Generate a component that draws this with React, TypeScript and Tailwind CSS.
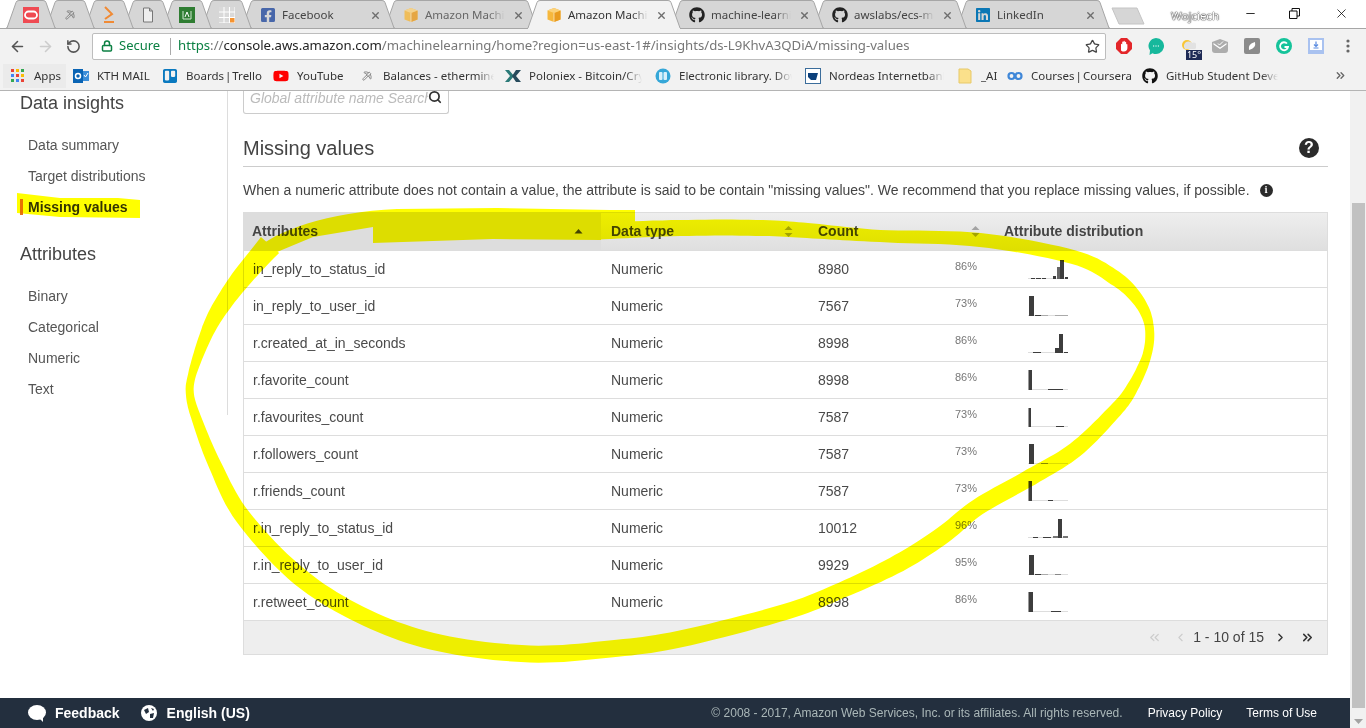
import React from "react";
import { FaGithub, FaLinkedin, FaFacebookSquare, FaYoutube, FaTrello } from "react-icons/fa";
import { Search, ArrowLeft, ArrowRight, RotateCw, Star, Lock, ChevronsLeft, ChevronLeft, ChevronRight, ChevronsRight, Minus, X, Pickaxe } from "lucide-react";

const Cube = ({ dim = false }: { dim?: boolean }) => (
  <svg width="16" height="16" viewBox="0 0 16 16" className={dim ? "shrink-0 opacity-80" : "shrink-0"}>
    <path d="M8 1 14.500 3.500V12.500L8 15 1.500 12.500V3.500Z" fill="#f6b73c" />
    <path d="M8 6 14.500 3.500V12.500L8 15Z" fill="#e99b1f" />
    <path d="M8 1 14.500 3.500 8 6 1.500 3.500Z" fill="#fbd27c" />
    <path d="M7.600 6V15H8.400V6Z" fill="#fff" opacity=".7" />
  </svg>
);

const TabShape = ({ w, active }: { w: number; active?: boolean }) => (
  <svg width={w} height="29" viewBox={`0 0 ${w} 29`} className="absolute left-0 top-0">
    <path
      d={`M0 ${active ? 29 : 28} L1 28 L10 2.500 Q10.500 .5 13 .5 L${w - 13} .5 Q${w - 10.500} .5 ${w - 10} 2.500 L${w - 1} 28 L${w} ${active ? 29 : 28}`}
      fill={active ? "#f2f2f2" : "#d6d6d6"}
      stroke="#a6a6a6"
      strokeWidth="1"
    />
  </svg>
);

const Tab = ({ w, z, icon, label, active, labelColor }: { w: number; z: number; icon: React.ReactNode; label?: string; active?: boolean; labelColor?: string }) => (
  <div className="relative -mr-[11px] h-[29px] shrink-0" style={{ width: w, zIndex: active ? 30 : z }}>
    <TabShape w={w} active={active} />
    <div className={`relative flex h-[28px] items-center pt-[2px] ${label ? "pl-[19px] pr-[14px]" : "justify-center"}`}>
      {icon}
      {label && (
        <>
          <span className={`ml-[6px] w-[80px] overflow-hidden whitespace-nowrap text-[11.500px] [mask-image:linear-gradient(to_right,black_80%,transparent)] ${labelColor ?? "text-[#444]"}`}>{label}</span>
          <X size={11} strokeWidth={3} className="ml-auto text-[#6d6d6d]" />
        </>
      )}
    </div>
  </div>
);

const bookmarks: { w: number; tw: number; label: string; icon: React.ReactNode; fade?: boolean; tight?: boolean }[] = [
  {
    w: 89, tw: 58, label: "KTH MAIL",
    icon: (
      <svg width="16" height="16" viewBox="0 0 16 16" className="shrink-0">
        <rect x="6" y="3" width="10" height="10" fill="#3c8ed8" />
        <rect x="0" y="1" width="10" height="14" fill="#0a64b4" />
        <circle cx="5" cy="8" r="2.500" fill="none" stroke="#fff" strokeWidth="1.500" />
        <path d="M11 7l1.500 2 2.500-4" stroke="#fff" fill="none" />
      </svg>
    ),
  },
  { w: 111, tw: 80, label: "Boards | Trello", tight: true, icon: <FaTrello size={16} color="#0a79bf" className="shrink-0" /> },
  { w: 86, tw: 52, label: "YouTube", icon: <FaYoutube size={16} color="#f00" className="shrink-0" /> },
  { w: 146, tw: 111, label: "Balances - ethermine", fade: true, icon: <span className="flex w-[16px] shrink-0 justify-center"><Pickaxe size={10} color="#777" /></span> },
  {
    w: 150, tw: 113, label: "Poloniex - Bitcoin/Crypto", fade: true,
    icon: (
      <svg width="16" height="14" viewBox="0 0 16 14" className="shrink-0">
        <path d="M0 1H4L9 7 4 13H0L5 7Z" fill="#2b7a78" />
        <path d="M16 1H11L7 7 11 13H16L11 7Z" fill="#274b5c" />
      </svg>
    ),
  },
  {
    w: 150, tw: 113, label: "Electronic library. Download", fade: true,
    icon: (
      <svg width="16" height="16" viewBox="0 0 16 16" className="shrink-0">
        <circle cx="8" cy="8" r="7.500" fill="#35a7d8" />
        <rect x="4" y="4" width="3.500" height="8" rx="1" fill="#d8f0fa" />
        <rect x="8.500" y="4" width="3.500" height="8" rx="1" fill="#d8f0fa" />
      </svg>
    ),
  },
  {
    w: 152, tw: 115, label: "Nordeas Internetbank", fade: true,
    icon: (
      <svg width="16" height="16" viewBox="0 0 16 16" className="shrink-0">
        <rect x=".5" y=".5" width="15" height="15" fill="#fff" stroke="#3b6d9b" />
        <path d="M3 5H13L11 12H6L3 9Z" fill="#0b3f7a" />
      </svg>
    ),
  },
  {
    w: 50, tw: 18, label: "_AI",
    icon: (
      <svg width="16" height="16" viewBox="0 0 16 16" className="shrink-0">
        <path d="M2 1H11L14 3V15H2Z" fill="#fbe08b" stroke="#e7c969" />
      </svg>
    ),
  },
  {
    w: 135, tw: 102, label: "Courses | Coursera", tight: true,
    icon: (
      <svg width="16" height="10" viewBox="0 0 16 10" className="shrink-0">
        <circle cx="4.500" cy="5" r="3" fill="none" stroke="#3f87d8" strokeWidth="2.200" />
        <circle cx="11.500" cy="5" r="3" fill="none" stroke="#3f87d8" strokeWidth="2.200" />
      </svg>
    ),
  },
  { w: 136, tw: 112, label: "GitHub Student Developer", fade: true, icon: <FaGithub size={16} color="#111" className="shrink-0" /> },
];

const spark: { bars: [number, number, number, string?][] }[] = [
  { bars: [[3, 4, 1], [8, 5, 1], [14, 4, 1], [25, 3, 3], [29, 3, 12, "#666"], [32, 4, 19], [37, 3, 2]] },
  { bars: [[1, 5, 20], [7, 6, 1], [13, 7, 1, "#aaa"], [27, 13, 1, "#aaa"]] },
  { bars: [[5, 8, 1], [27, 4, 5], [31, 4, 19], [36, 4, 1]] },
  { bars: [[0, 1, 20, "#999"], [1, 3, 20], [20, 15, 1]] },
  { bars: [[0, 1, 19, "#999"], [1, 2, 19], [28, 8, 1]] },
  { bars: [[1, 5, 20], [13, 7, 1, "#888"]] },
  { bars: [[0, 1, 20, "#999"], [1, 3, 20], [20, 5, 1]] },
  { bars: [[5, 5, 1], [15, 8, 1], [25, 5, 2, "#777"], [30, 4, 19], [35, 5, 2, "#777"]] },
  { bars: [[1, 5, 20], [7, 6, 1], [13, 7, 1, "#aaa"], [27, 6, 1, "#888"]] },
  { bars: [[0, 1, 20, "#999"], [1, 4, 20], [23, 10, 1]] },
];

const rows = [
  ["in_reply_to_status_id", "8980", "86%"],
  ["in_reply_to_user_id", "7567", "73%"],
  ["r.created_at_in_seconds", "8998", "86%"],
  ["r.favorite_count", "8998", "86%"],
  ["r.favourites_count", "7587", "73%"],
  ["r.followers_count", "7587", "73%"],
  ["r.friends_count", "7587", "73%"],
  ["r.in_reply_to_status_id", "10012", "96%"],
  ["r.in_reply_to_user_id", "9929", "95%"],
  ["r.retweet_count", "8998", "86%"],
];

const Spark = ({ i }: { i: number }) => (
  <svg width="40" height="22" viewBox="0 0 40 22" className="block">
    <rect x="0" y="20" width="40" height="1" fill="#ddd" />
    {spark[i].bars.map(([x, w, h, c], k) => (
      <rect key={k} x={x} y={21 - h} width={w} height={h} fill={c ?? "#3d3d3d"} />
    ))}
  </svg>
);

const SortBoth = () => (
  <svg width="9" height="11" viewBox="0 0 9 11" className="shrink-0">
    <path d="M4.500 0 8.500 4H.5Z M4.500 11 .5 7H8.500Z" fill="#a3a3a3" />
  </svg>
);

// A marker stroke of varying width, sampled along a smooth line through [x, y, width] points.
function ribbon(p: number[][]) {
  const pts: number[][] = [];
  for (let i = 0; i < p.length - 1; i++) {
    const a = p[Math.max(0, i - 1)], b = p[i], c = p[i + 1], e = p[Math.min(p.length - 1, i + 2)];
    for (let k = 0; k < 10; k++) {
      const t = k / 10;
      const f = (j: number) =>
        0.5 * (2 * b[j] + (c[j] - a[j]) * t + (2 * a[j] - 5 * b[j] + 4 * c[j] - e[j]) * t * t + (3 * b[j] - a[j] - 3 * c[j] + e[j]) * t * t * t);
      pts.push([f(0), f(1), b[2] + (c[2] - b[2]) * t]);
    }
  }
  pts.push(p[p.length - 1]);
  const left: string[] = [], right: string[] = [];
  pts.forEach((q, i) => {
    const s = pts[Math.max(0, i - 1)], n = pts[Math.min(pts.length - 1, i + 1)];
    const dx = n[0] - s[0], dy = n[1] - s[1], l = Math.hypot(dx, dy) || 1;
    const h = q[2] / 2;
    left.push(`${(q[0] - (dy / l) * h).toFixed(1)} ${(q[1] + (dx / l) * h).toFixed(1)}`);
    right.unshift(`${(q[0] + (dy / l) * h).toFixed(1)} ${(q[1] - (dx / l) * h).toFixed(1)}`);
  });
  return `M${left.join("L")}L${right.join("L")}Z`;
}

const ring = [
  [270, 245, 24], [240, 280, 20], [217, 313, 16], [204, 340, 12], [192, 375, 8], [190, 395, 8], [197, 420, 10], [215, 465, 13], [243, 517, 16],
  [300, 577, 18], [367, 618, 17], [440, 643, 17], [530, 654, 17], [610, 649, 17], [680, 639, 17], [785, 612, 16], [842, 590, 16], [899, 563, 18],
  [943, 535, 18], [978, 507, 17], [1031, 477, 17], [1075, 450, 16], [1113, 413, 14], [1131, 390, 12], [1147, 355, 9], [1149, 325, 9], [1138, 300, 12],
  [1115, 278, 15], [1073, 257, 14], [980, 240, 14], [880, 236, 12], [813, 231, 15], [763, 228, 16], [680, 228, 16], [600, 231, 17],
];

const Marker = () => (
  <svg width="1366" height="728" viewBox="0 0 1366 728" className="pointer-events-none absolute left-0 top-0 z-40 mix-blend-multiply">
    <path d="M248 258C262 236 320 212 397 209L497 208L610 210L635 210L635 223L601 226V240L493 239L373 243V227L313 237L277 252Z" fill="#ff0" />
    <path d={ribbon(ring)} fill="#ff0" />
    <path d="M17 193L60 198L118 198L140 200V218L60 217L17 213Z" fill="#ff0" />
  </svg>
);

const NavItem = ({ children, active }: { children: React.ReactNode; active?: boolean }) => (
  <div className={`flex h-[31px] items-center pl-[28px] text-[14px] ${active ? "font-bold text-[#333]" : "text-[#555]"}`}>{children}</div>
);

const Slot = ({ children }: { children: React.ReactNode }) => <div className="relative flex h-[32px] w-[32px] shrink-0 items-center justify-center">{children}</div>;

export default function App() {
  return (
    <div className="relative flex h-[728px] w-[1366px] flex-col overflow-hidden bg-white font-['Liberation_Sans',Arial,sans-serif] text-[#444]">
      {/* tab strip */}
      <div className="relative flex h-[29px] shrink-0 items-start border-b border-[#a6a6a6] bg-white pl-[6px] font-['Noto_Sans',sans-serif]">
        <Tab w={50} z={20} icon={<svg width="16" height="16" viewBox="0 0 16 16"><rect width="16" height="16" fill="#ef4a52" /><rect x="2" y="4.500" width="12" height="7" rx="3.500" fill="none" stroke="#fff" strokeWidth="1.800" /></svg>} />
        <Tab w={50} z={19} icon={<Pickaxe size={10} color="#777" />} />
        <Tab w={50} z={18} icon={<svg width="12" height="18" viewBox="0 0 12 18"><path d="M2 1L9 8 2 13" fill="none" stroke="#f08a34" strokeWidth="2" /><rect x="1" y="15" width="10" height="2" fill="#f08a34" /></svg>} />
        <Tab w={50} z={17} icon={<svg width="12" height="16" viewBox="0 0 12 16"><path d="M1.500 1H7.500L10.500 4V15H1.500ZM7.500 1V4H10.500" fill="#eee" stroke="#777" /></svg>} />
        <Tab w={50} z={16} icon={<svg width="16" height="16" viewBox="0 0 16 16"><rect width="16" height="16" fill="#2f7d32" /><path d="M4 4V12H12V4" fill="none" stroke="#cfe8cf" /><path d="M6 10L8 5 10 10" fill="none" stroke="#fff" /></svg>} />
        <Tab w={51} z={15} icon={<svg width="16" height="16" viewBox="0 0 16 16"><rect width="16" height="16" fill="#fff" />{[0, 5.500, 11].flatMap((y) => [0, 5.500, 11].map((x) => <rect key={`${x}${y}`} x={x} y={y} width="4.500" height="4.500" fill={x === 11 && y === 11 ? "#f59331" : "#d9d9d9"} />))}</svg>} />
        <Tab w={154} z={14} label="Facebook" icon={<FaFacebookSquare size={16} color="#4867aa" className="shrink-0" />} />
        <Tab w={154} z={13} label="Amazon Machine" labelColor="text-[#666]" icon={<Cube dim />} />
        <Tab w={154} z={12} active label="Amazon Machine" labelColor="text-[#333]" icon={<Cube />} />
        <Tab w={154} z={11} label="machine-learning" icon={<FaGithub size={16} color="#222" className="shrink-0" />} />
        <Tab w={154} z={10} label="awslabs/ecs-machine" icon={<FaGithub size={16} color="#222" className="shrink-0" />} />
        <Tab w={154} z={9} label="LinkedIn" icon={<FaLinkedin size={16} color="#0a77b5" className="shrink-0" />} />
        <svg width="34" height="18" viewBox="0 0 34 18" className="ml-[12px] mt-[7px] shrink-0">
          <path d="M1 1H26L33 17H8Z" fill="#d6d6d6" stroke="#c4c4c4" strokeLinejoin="round" />
        </svg>
        <span className="ml-[26px] mt-[7px] w-[44px] whitespace-nowrap text-[11.500px] text-white [text-shadow:0_0_1.500px_#000,0_0_1px_#000]">Wojciech</span>
        <Minus size={13} strokeWidth={1.500} className="ml-[29px] mt-[7px] text-black" />
        <svg width="11" height="11" viewBox="0 0 11 11" className="ml-[32px] mt-[8px]"><path d="M.5 3H8V10.500H.5ZM3 3V.5H10.500V8H8" fill="none" stroke="#111" /></svg>
        <X size={15} strokeWidth={1.200} className="ml-[34px] mt-[6px] text-black" />
      </div>

      {/* toolbar */}
      <div className="flex h-[34px] shrink-0 items-center bg-[#f2f2f2] font-['Noto_Sans',sans-serif]">
        <ArrowLeft size={17} strokeWidth={2.200} className="ml-[9px] text-[#555]" />
        <ArrowRight size={17} strokeWidth={2.200} className="ml-[11px] text-[#ccc]" />
        <RotateCw size={15} strokeWidth={2.500} className="ml-[12px] scale-x-[-1] text-[#555]" />
        <div className="ml-[11px] flex h-[27px] w-[1014px] items-center rounded-[2px] border border-[#bdbdbd] bg-white pl-[8px] text-[14px]">
          <Lock size={12} strokeWidth={3} className="text-[#0b8043]" />
          <span className="ml-[6px] w-[42px] whitespace-nowrap text-[13px] text-[#0b8043]">Secure</span>
          <span className="ml-[9px] h-[17px] w-px bg-[#aaa]" />
          <span className="ml-[7px] whitespace-nowrap text-[13.200px]">
            <span className="text-[#0b8043]">https</span>
            <span className="text-[#777]">://</span>
            <span className="text-[#222]">console.aws.amazon.com</span>
            <span className="text-[#777]">/machinelearning/home?region=us-east-1#/insights/ds-L9KhvA3QDiA/missing-values</span>
          </span>
          <Star size={15} strokeWidth={2} className="ml-auto mr-[5px] text-[#444]" />
        </div>
        {/* extensions */}
        <div className="ml-[2px] flex items-center">
          <Slot>
            <svg width="16" height="16" viewBox="0 0 16 16"><path d="M5 0H11L16 5V11L11 16H5L0 11V5Z" fill="#e3262a" /><path d="M5 12.500V6.500C5 5.500 6 5.500 6.200 6.500V4.200C6.200 3.200 7.500 3.200 7.500 4.200V3.500C7.500 2.500 8.800 2.500 8.800 3.500V4.500C8.800 3.500 10.200 3.500 10.200 4.500V6.500C10.200 5.800 11.400 5.800 11.400 6.500V10C11.400 12 10 13.500 8 13.500H6.500Z" fill="#fff" /></svg>
          </Slot>
          <Slot>
            <svg width="16" height="17" viewBox="0 0 16 17"><path d="M8 0a8 8 0 1 1-3.500 15.200L1.500 17 2 12.600A8 8 0 0 1 8 0Z" fill="#16b89c" /><path d="M5 8h1.200M7.400 8h1.200M9.800 8h1.200" stroke="#fff" /></svg>
          </Slot>
          <Slot>
            <svg width="14" height="13" viewBox="0 0 14 13" className="absolute left-[10px] top-[9px]"><circle cx="5" cy="6" r="5" fill="#f9c635" /><path d="M3 10H13A3 3 0 0 0 10 4 4 4 0 0 0 3 10Z" fill="#e2e2e2" /></svg>
            <span className="absolute left-[14px] top-[20px] flex h-[10px] w-[16px] items-center justify-center bg-[#1e2a55] text-[9px] text-white">15°</span>
          </Slot>
          <Slot>
            <svg width="16" height="14" viewBox="0 0 16 14"><path d="M0 3L8 0 16 3V11Q16 14 13 14H3Q0 14 0 11Z" fill="#adadad" /><path d="M1.500 4L8 8.500 14.500 4V5.500L8 10 1.500 5.500Z" fill="#fff" /><path d="M6 4.500L7.500 6 11 2.500" stroke="#fff" fill="none" /></svg>
          </Slot>
          <Slot>
            <svg width="16" height="16" viewBox="0 0 16 16"><rect width="16" height="16" rx="2" fill="#8b8b8b" /><path d="M5 12Q3.500 6 11 4Q12.500 10 5 12Z" fill="#fff" /></svg>
          </Slot>
          <Slot>
            <svg width="16" height="16" viewBox="0 0 16 16"><circle cx="8" cy="8" r="8" fill="#15c39a" /><path d="M11 5.500A4 4 0 1 0 12 9H8.500" fill="none" stroke="#fff" strokeWidth="1.800" /></svg>
          </Slot>
          <Slot>
            <svg width="16" height="16" viewBox="0 0 16 16"><rect width="16" height="16" fill="#a9c2f0" /><rect x="2" y="2" width="12" height="10" fill="#fff" /><path d="M8 3.500V8M6 6.500L8 8.500 10 6.500M5.500 10H10.500" stroke="#5a8be0" strokeWidth="1.200" fill="none" /></svg>
          </Slot>
          <Slot>
            <svg width="4" height="14" viewBox="0 0 4 14"><circle cx="2" cy="2" r="1.600" fill="#666" /><circle cx="2" cy="7" r="1.600" fill="#666" /><circle cx="2" cy="12" r="1.600" fill="#666" /></svg>
          </Slot>
        </div>
      </div>

      {/* bookmarks */}
      <div className="flex h-[28px] shrink-0 items-center border-b border-[#b4b4b4] bg-[#f2f2f2] pb-[2px] pl-[3px] font-['Noto_Sans',sans-serif] text-[11.500px] text-[#333]">
        <div className="mr-[7px] flex h-[24px] w-[63px] shrink-0 items-center bg-[#ebebeb] pl-[8px]">
          <svg width="13" height="13" viewBox="0 0 13 13" className="shrink-0">
            {[0, 5, 10].flatMap((y, i) => [0, 5, 10].map((x, j) => (
              <rect key={`${i}${j}`} x={x} y={y} width="3" height="3" fill={[["#e94335", "#fbbc05", "#34a853"], ["#4285f4", "#ea4335", "#fbbc05"], ["#34a853", "#4285f4", "#ea4335"]][i][j]} />
            )))}
          </svg>
          <span className="ml-[10px]">Apps</span>
        </div>
        {bookmarks.map((b) => (
          <div key={b.label} className="flex h-[24px] shrink-0 items-center" style={{ width: b.w }}>
            {b.icon}
            <span
              className={`ml-[8px] overflow-hidden whitespace-nowrap ${b.tight ? "[word-spacing:-2px]" : ""} ${b.fade ? "[mask-image:linear-gradient(to_right,black_85%,transparent)]" : ""}`}
              style={{ width: b.tw }}
            >
              {b.label}
            </span>
          </div>
        ))}
        <ChevronsRight size={13} strokeWidth={2.500} className="ml-[56px] text-[#666]" />
      </div>

      {/* page */}
      <div className="flex min-h-0 flex-1">
        <div className="flex min-w-0 flex-1 flex-col">
          <div className="flex min-h-0 flex-1">
            <aside className="h-[324px] w-[228px] shrink-0 border-r border-[#ddd]">
              <div className="pl-[20px] text-[18px] leading-[24px] text-[#444]">Data insights</div>
              <div className="mt-[15px]">
                <NavItem>Data summary</NavItem>
                <NavItem>Target distributions</NavItem>
                <div className="relative">
                  <span className="absolute left-[20px] top-[7px] h-[16px] w-[3px] bg-[#e8731a]" />
                  <NavItem active>Missing values</NavItem>
                </div>
              </div>
              <div className="mt-[19px] pl-[20px] text-[18px] leading-[24px] text-[#444]">Attributes</div>
              <div className="mt-[15px]">
                <NavItem>Binary</NavItem>
                <NavItem>Categorical</NavItem>
                <NavItem>Numeric</NavItem>
                <NavItem>Text</NavItem>
              </div>
            </aside>
            <main className="ml-[15px] w-[1085px] shrink-0">
              <div className="flex h-[23px] w-[206px] items-start rounded-b-[3px] border-x border-b border-[#ccc] pl-[6px] pr-[5px]">
                <span className="w-[178px] overflow-hidden whitespace-nowrap text-[14px] italic leading-[14px] text-[#bbb]">Global attribute name Search</span>
                <Search size={14} strokeWidth={3} className="-mt-[1px] text-[#333]" />
              </div>
              <h2 className="mt-[20px] border-b border-[#ccc] pb-[4px] text-[20px] font-normal leading-[28px] text-[#444]">
                <span className="flex items-center justify-between">
                  Missing values
                  <span className="mr-[9px] flex h-[20px] w-[20px] items-center justify-center rounded-full bg-[#2b2b2b] text-[16px] font-bold text-white">?</span>
                </span>
              </h2>
              <p className="mt-[13px] flex h-[20px] items-center whitespace-nowrap text-[14px] leading-[20px] text-[#444]">
                When a numeric attribute does not contain a value, the attribute is said to be contain "missing values". We recommend that you replace missing values, if possible.
                <span className="ml-[10px] flex h-[13px] w-[13px] items-center justify-center rounded-full bg-[#2b2b2b] font-serif text-[10px] font-bold text-white">i</span>
              </p>
              <div className="mt-[12px] border border-[#ddd] text-[14px]">
                <div className="grid h-[38px] grid-cols-[357px_207px_186px_1fr] border-b border-[#ddd] font-bold text-[#444]">
                  <div className="flex items-center justify-between bg-[#ddd] pl-[8px] pr-[18px]">
                    Attributes
                    <svg width="9" height="5" viewBox="0 0 9 5"><path d="M4.500 0 8.500 4.500H.5Z" fill="#444" /></svg>
                  </div>
                  <div className="flex items-center justify-between bg-gradient-to-b from-[#eeeeee] to-[#dfdfdf] pl-[10px] pr-[15px]">
                    Data type
                    <SortBoth />
                  </div>
                  <div className="flex items-center justify-between bg-gradient-to-b from-[#eeeeee] to-[#dfdfdf] pl-[10px] pr-[14px]">
                    Count
                    <SortBoth />
                  </div>
                  <div className="flex items-center bg-gradient-to-b from-[#eeeeee] to-[#dfdfdf] pl-[10px]">Attribute distribution</div>
                </div>
                {rows.map((r, i) => (
                  <div key={r[0]} className="grid h-[37px] grid-cols-[357px_207px_186px_1fr] border-b border-[#ddd] text-[#4a4a4a]">
                    <div className="flex items-center pl-[9px]">{r[0]}</div>
                    <div className="flex items-center pl-[10px]">Numeric</div>
                    <div className="flex items-center justify-between pl-[10px] pr-[17px]">
                      <span>{r[1]}</span>
                      <span className="mb-[6px] text-[11px] text-[#777]">{r[2]}</span>
                    </div>
                    <div className="flex items-end pb-[7px] pl-[34px]">
                      <Spark i={i} />
                    </div>
                  </div>
                ))}
                <div className="flex h-[33px] items-center justify-end bg-[#eee] pr-[12px] text-[#444]">
                  <ChevronsLeft size={15} className="text-[#ccc]" />
                  <ChevronLeft size={13} className="ml-[12px] text-[#ccc]" />
                  <span className="ml-[6px]">1 - 10 of 15</span>
                  <ChevronRight size={13} strokeWidth={2.500} className="ml-[10px] text-[#333]" />
                  <ChevronsRight size={15} strokeWidth={2.500} className="ml-[13px] text-[#333]" />
                </div>
              </div>
            </main>
          </div>

          {/* footer */}
          <footer className="flex h-[30px] shrink-0 items-center bg-[#232f3e] pl-[28px] pr-[33px] text-white">
            <svg width="18" height="17" viewBox="0 0 18 17"><ellipse cx="9" cy="7.500" rx="9" ry="7.500" fill="#fff" /><path d="M11 13L15 17 15 10Z" fill="#fff" /></svg>
            <span className="ml-[9px] text-[14px] font-bold">Feedback</span>
            <svg width="16" height="16" viewBox="0 0 16 16" className="ml-[21px]"><circle cx="8" cy="8" r="8" fill="#fff" /><path d="M3 5L7 3 8 7 5 9ZM9 9L13 8 12 13 9 13ZM10 3L13 4 12 6Z" fill="#232f3e" /></svg>
            <span className="ml-[10px] text-[14px] font-bold">English (US)</span>
            <span className="ml-auto text-[12px] text-[#aab7b8]">© 2008 - 2017, Amazon Web Services, Inc. or its affiliates. All rights reserved.</span>
            <span className="ml-[25px] text-[12px]">Privacy Policy</span>
            <span className="ml-[24px] text-[12px]">Terms of Use</span>
          </footer>
        </div>

        {/* scrollbar */}
        <div className="flex w-[16px] shrink-0 flex-col bg-[#f1f1f1]">
          <div className="h-[112px]" />
          <div className="ml-[2px] mr-[1px] h-[505px] bg-[#c1c1c1]" />
          <div className="flex flex-1 items-end justify-center pb-[4px]">
            <svg width="9" height="5" viewBox="0 0 9 5"><path d="M0 0H9L4.500 5Z" fill="#a3a3a3" /></svg>
          </div>
        </div>
      </div>

      <Marker />
    </div>
  );
}
